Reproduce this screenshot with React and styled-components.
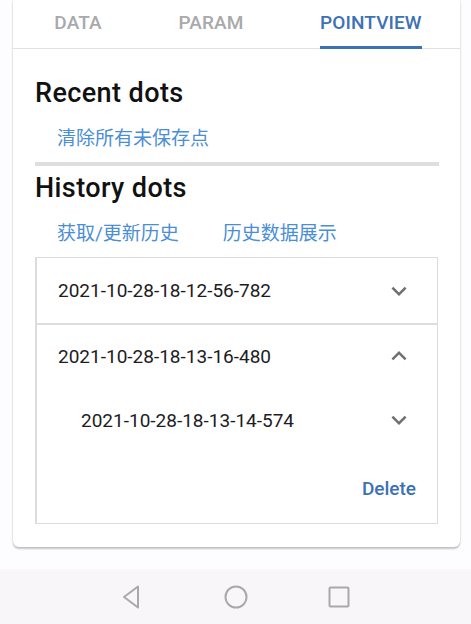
import React from "react";
import styled, { createGlobalStyle } from "styled-components";

const GlobalStyle = createGlobalStyle`
  html, body {
    margin: 0;
    padding: 0;
    background: #fdfcfe;
    font-family: Roboto, "Noto Sans CJK SC", "Liberation Sans", sans-serif;
  }
  #root {
    height: 624px;
    display: flex;
    flex-direction: column;
    overflow: hidden;
  }
`;

const Page = styled.div`
  flex: 1;
  padding: 0 11px 0 13px;
`;

const Card = styled.div`
  margin-top: -4px;
  background: #fff;
  border-radius: 6px;
  box-shadow: 0 2px 2px rgba(0, 0, 0, 0.22), 0 0 2px rgba(0, 0, 0, 0.12);
  padding-top: 4px;
`;

const TabBar = styled.div`
  display: flex;
  justify-content: space-around;
  height: 48px;
  padding-left: 3px;
  border-bottom: 1px solid #e2e0e4;
`;

const Tab = styled.div`
  position: relative;
  display: flex;
  align-items: center;
  font-size: 19px;
  font-weight: 500;
  letter-spacing: 0.1px;
  color: ${(p) => (p.active ? "#3b72b6" : "#a9a8ab")};
  padding-bottom: 4px;

  &::after {
    content: "";
    display: ${(p) => (p.active ? "block" : "none")};
    position: absolute;
    left: 0;
    right: 0;
    bottom: -1px;
    height: 3px;
    background: #3b72b6;
  }
`;

const Body = styled.div`
  padding: 29px 22px 23px;
`;

const Heading = styled.h2`
  margin: 0;
  font-size: 27px;
  font-weight: 500;
  letter-spacing: 0.4px;
  line-height: 30px;
  color: #111;
`;

const LinkRow = styled.div`
  display: flex;
  height: 44px;
  align-items: center;
  margin-top: 6px;
`;

const LinkButton = styled.span`
  padding: 0 22px;
  font-size: 19px;
  color: #4a8ed6;
  white-space: nowrap;
`;

const Divider = styled.div`
  height: 4px;
  background: #dedde0;
  margin: 4px -1px 7px 0;
`;

const Accordion = styled.div`
  margin-top: 4px;
  border: 1px solid #dcdbde;
  border-left-width: 2px;
`;

const Item = styled.div`
  & + & {
    border-top: 2px solid #dedde0;
  }
`;

const Row = styled.div`
  display: flex;
  align-items: center;
  justify-content: space-between;
  height: ${(p) => p.h}px;
  padding: 0 23px 0 ${(p) => p.indent}px;
  font-size: 19px;
  color: #1d1c1f;
`;

const Actions = styled.div`
  display: flex;
  justify-content: flex-end;
  align-items: center;
  height: 70px;
  padding: 0 21px;
`;

const DeleteButton = styled.span`
  font-size: 19px;
  font-weight: 500;
  color: #3b72b6;
`;

const Chevron = ({ up }) => (
  <svg
    width="30"
    height="30"
    viewBox="0 0 24 24"
    style={{ transform: up ? "rotate(180deg)" : "none" }}
  >
    <path fill="#6f6e72" d="M16.59 8.59 12 13.17 7.41 8.59 6 10l6 6 6-6z" />
  </svg>
);

const NavBar = styled.div`
  height: 55px;
  background: #f8f6f9;
  display: flex;
  align-items: center;
  justify-content: center;
  gap: 73px;
`;

const NavIcon = styled.svg`
  width: 30px;
  height: 30px;
`;

export default function App() {
  return (
    <>
      <GlobalStyle />
      <Page>
        <Card>
          <TabBar>
            <Tab>DATA</Tab>
            <Tab>PARAM</Tab>
            <Tab active>POINTVIEW</Tab>
          </TabBar>
          <Body>
            <Heading>Recent dots</Heading>
            <LinkRow>
              <LinkButton>清除所有未保存点</LinkButton>
            </LinkRow>
            <Divider />
            <Heading>History dots</Heading>
            <LinkRow>
              <LinkButton>获取/更新历史</LinkButton>
              <LinkButton>历史数据展示</LinkButton>
            </LinkRow>
            <Accordion>
              <Item>
                <Row h={65} indent={21}>
                  <span>2021-10-28-18-12-56-782</span>
                  <Chevron />
                </Row>
              </Item>
              <Item>
                <Row h={62} indent={21}>
                  <span>2021-10-28-18-13-16-480</span>
                  <Chevron up />
                </Row>
                <Row h={66} indent={44}>
                  <span>2021-10-28-18-13-14-574</span>
                  <Chevron />
                </Row>
                <Actions>
                  <DeleteButton>Delete</DeleteButton>
                </Actions>
              </Item>
            </Accordion>
          </Body>
        </Card>
      </Page>
      <NavBar>
        <NavIcon viewBox="0 0 30 30">
          <path
            d="M20 4.5 L20 25.5 L6 15 Z"
            fill="none"
            stroke="#a9a8ab"
            strokeWidth="2"
            strokeLinejoin="round"
          />
        </NavIcon>
        <NavIcon viewBox="0 0 30 30">
          <circle cx="15" cy="15" r="10.5" fill="none" stroke="#a9a8ab" strokeWidth="2" />
        </NavIcon>
        <NavIcon viewBox="0 0 30 30">
          <rect x="5.5" y="5.5" width="19" height="19" rx="1" fill="none" stroke="#a9a8ab" strokeWidth="2" />
        </NavIcon>
      </NavBar>
    </>
  );
}
